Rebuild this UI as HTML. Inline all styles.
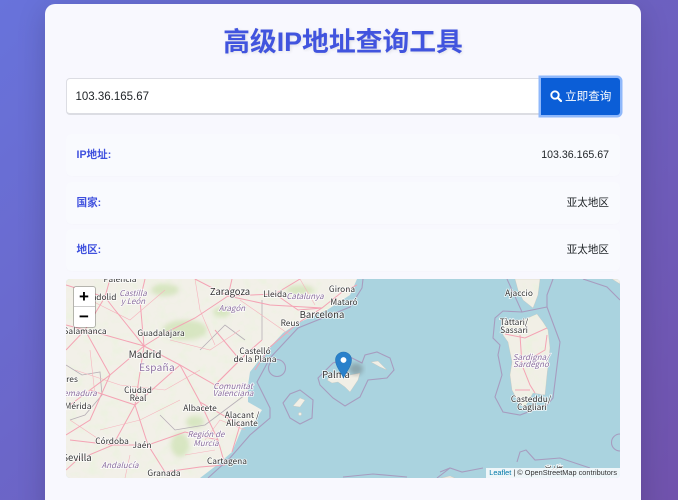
<!DOCTYPE html>
<html lang="zh">
<head>
<meta charset="utf-8">
<title>高级IP地址查询工具</title>
<style>
*{box-sizing:border-box;margin:0;padding:0}
html,body{width:678px;height:500px;overflow:hidden}
body{position:relative;background:linear-gradient(135deg,#6873db 0%,#7052ac 100%);font-family:"Liberation Sans","Noto Sans CJK SC",sans-serif}
.card{position:absolute;left:45px;top:4px;width:596px;height:520px;background:#f8f8fe;border-radius:10px;box-shadow:0 6px 28px rgba(0,0,0,.17)}
h1{position:absolute;left:45px;top:24px;width:596px;text-align:center;font:700 26.8px/36px "Liberation Sans","Noto Sans CJK SC",sans-serif;color:#4154de;text-shadow:1px 1px 3px rgba(0,0,0,.1)}
.input{position:absolute;left:66px;top:78px;width:476px;height:37px;background:#fff;border:1px solid #dcdde3;border-bottom-width:2px;border-radius:4px 0 0 4px;font-size:11.5px;line-height:36px;padding-left:8.5px;color:#212529}
.btn{position:absolute;left:541px;top:78px;width:79px;height:37px;background:#0b5ed7;border-radius:0 3px 3px 0;box-shadow:0 0 0 2.5px #8fb8fb}
.btn svg{position:absolute;left:9px;top:12px}
.btn span{position:absolute;left:24px;top:0;line-height:37px;font-size:11.6px;color:#fff;font-family:"Noto Sans CJK SC",sans-serif}
.row{position:absolute;left:66px;width:554px;height:42px;background:#f9fafe;border-radius:6px;box-shadow:0 1px 3px rgba(0,0,0,.012);font-size:10.6px;line-height:43px}
.row b{position:absolute;left:10.5px;color:#3f50de;font-weight:700;font-family:"Liberation Sans","Noto Sans CJK SC",sans-serif}
.row span{position:absolute;right:11px;color:#212529;font-family:"Liberation Sans","Noto Sans CJK SC",sans-serif}
.map{position:absolute;left:66px;top:279px;width:554px;height:199px;overflow:hidden;border-radius:4px;background:#aad3df}
.map svg{position:absolute;left:0;top:0}
.zoom{position:absolute;left:7.5px;top:8px;width:21px;height:40px;background:#fff;border-radius:2px;box-shadow:0 0 0 1px rgba(0,0,0,.25)}
.zoom div{height:20px;text-align:center;font:700 17px/20px "Liberation Sans",sans-serif;color:#000}
.zoom div:first-child{border-bottom:1px solid #ccc}
.attr{position:absolute;right:0;bottom:0;height:10.5px;padding:0 3px;background:rgba(255,255,255,.8);font:7.35px/10.5px "Liberation Sans",sans-serif;color:#333;white-space:nowrap}
.attr u{color:#0078a8;text-decoration:none}
text{font-family:"Noto Sans CJK SC","Liberation Sans",sans-serif;text-anchor:middle;paint-order:stroke;stroke:rgba(255,255,255,.85);stroke-width:1.6px;fill:#333;font-size:8.4px}
text.r{fill:#8a6d9e;font-style:italic;font-size:8px}
</style>
</head>
<body>
<div class="card"></div>
<h1>高级IP地址查询工具</h1>
<div class="input">103.36.165.67</div>
<div class="btn">
<svg width="12" height="12" viewBox="0 0 12 12"><circle cx="5" cy="5" r="3.7" fill="none" stroke="#fff" stroke-width="1.9"/><path d="M7.8 7.8L11 11" stroke="#fff" stroke-width="2.2" stroke-linecap="round"/></svg>
<span>立即查询</span></div>
<div class="row" style="top:134px"><b>IP地址:</b><span>103.36.165.67</span></div>
<div class="row" style="top:182px"><b>国家:</b><span>亚太地区</span></div>
<div class="row" style="top:229px"><b>地区:</b><span>亚太地区</span></div>
<div class="map">
<svg width="554" height="199" viewBox="66 279 554 199">
<defs>
<filter id="bl" x="-20%" y="-20%" width="140%" height="140%"><feGaussianBlur stdDeviation="2.5"/></filter>
<filter id="mot" x="0" y="0" width="100%" height="100%"><feTurbulence type="fractalNoise" baseFrequency=".09" numOctaves="3" seed="7"/><feColorMatrix values="0 0 0 0 .80  0 0 0 0 .90  0 0 0 0 .70  1.4 0 0 0 -.66"/></filter>
<clipPath id="land"><path d="M66 279H357L350 295L327 310L298 323L283 333L270 347L257 363L250 372L248 385L248 402L262 410L252 425L242 428L232 452L217 465L200 478H66Z"/></clipPath>
<clipPath id="sard"><path d="M537 314L543 322L548 330L550 348L547 375L545 395L533 393L525 407L520 405L512 390L510 375L512 362L508 342L503 335L503 320L523 320Z"/><path d="M515 279L540 279L538 295L533 308L523 300L518 290Z"/></clipPath>
</defs>
<path d="M66 279H357L350 295L327 310L298 323L283 333L270 347L257 363L250 372L248 385L248 402L262 410L252 425L242 428L232 452L217 465L200 478H66Z" fill="#f2f0e8"/>
<rect x="66" y="279" width="300" height="199" filter="url(#mot)" clip-path="url(#land)"/>
<g fill="#c6dfa8" filter="url(#bl)" opacity=".6" clip-path="url(#land)">
<ellipse cx="165" cy="290" rx="14" ry="6"/><ellipse cx="185" cy="330" rx="22" ry="10"/><ellipse cx="180" cy="445" rx="9" ry="12"/>
<ellipse cx="195" cy="422" rx="9" ry="6"/><ellipse cx="222" cy="312" rx="9" ry="5"/><ellipse cx="300" cy="290" rx="14" ry="5"/>
</g>
<g fill="#f1efe6" stroke="#c5c0b6" stroke-width=".3">
<path d="M327 380L333 375L343 373L350 375L360 373L358 380L350 392L345 387L338 382L332 383Z"/>
<path d="M371 362L378 361L387 370L380 367Z"/>
<path d="M293 406L300 398L305 400L300 407Z"/><circle cx="300" cy="414" r="1.6"/>
<path d="M537 314L543 322L548 330L550 348L547 375L545 395L533 393L525 407L520 405L512 390L510 375L512 362L508 342L503 335L503 320L523 320Z"/>
<path d="M515 279L540 279L538 295L533 308L523 300L518 290Z"/>
<path d="M612 279H620V284Z"/><path d="M441 478L450 476L455 478Z"/>
</g>
<rect x="500" y="279" width="55" height="135" filter="url(#mot)" clip-path="url(#sard)"/>
<g fill="none" stroke="#b6aeb6" stroke-width=".8">
<path d="M66 365L82 375L100 372L102 395L85 415L70 420M160 415L175 430L205 425L245 395M200 350L225 325L245 340M262 300L262 340"/>
</g>
<g fill="none" stroke="#f6b3bd" stroke-width=".6">
<path d="M90 300L130 320L165 290M75 370L120 385L165 390L200 370M100 430L140 420L180 400M170 340L210 350L240 330M240 300L290 335M185 455L215 450M70 420L100 440M195 279L200 310L215 345M90 350L95 395M245 430L220 420L205 440M300 279L315 305M130 455L125 478"/>
</g>
<g fill="none" stroke="#f4a3b4" stroke-width="1">
<path d="M66 325L105 335L144 346L165 333L195 318L228 296L270 305L322 308"/>
<path d="M144 346L180 365L215 385L248 385"/>
<path d="M180 365L200 402L240 425L232 452"/>
<path d="M144 346L135 405L113 445L77 460L66 470"/>
<path d="M144 346L110 375L70 405"/>
<path d="M144 346L115 310L105 297L66 285"/>
<path d="M144 346L140 300L145 279"/>
<path d="M200 402L218 440L225 465"/>
<path d="M135 405L148 445L165 472"/>
<path d="M113 445L148 445L185 432L218 440"/>
<path d="M165 472L200 467L225 465"/>
<path d="M322 308L298 323L270 347L255 370"/>
<path d="M275 294L298 310L322 308L342 292L357 285"/>
<path d="M228 296L232 279M228 296L195 279M228 296L275 294L300 279"/>
<path d="M90 390L135 405L180 365M70 440L113 445M240 360L215 385M110 375L90 420L66 435"/>
<path d="M110 279L105 297L85 330L66 350M85 330L110 375"/>
<path d="M215 385L245 355L262 340M215 330L240 360"/>
<path d="M505 334L525 338L547 328M520 335L522 365L530 385L535 393M515 390L530 390M547 335L545 350L528 360"/>
</g>
<g fill="none" stroke="#a79cbf" stroke-width="1.1">
<path d="M363 279L362 288L350 307L298 328L270 358L257 382L270 408L270 418L250 435L230 458L208 478"/>
<path d="M318 378L333 363L350 357L362 363L365 355L377 352L390 358L394 370L387 378L368 380L360 397L345 406L333 398L320 385Z"/>
<path d="M283 403L290 394L300 390L313 400L312 418L300 424L290 418Z"/>
<circle cx="277" cy="368" r="8.5"/>
<path d="M507 279L522 312L547 307L560 342L553 398L547 405L520 415L503 412L495 397L502 375L498 355L500 345L493 338L495 318L503 311L522 312"/>
<path d="M553 279L547 295L547 307"/>
<path d="M583 279L607 287L620 300"/>
<path d="M620 434A8 8 0 0 0 620 451"/>
<path d="M517 462L520 452L526 450L535 460L560 458L590 468"/>
<path d="M440 472L450 468L462 472L483 468"/>
<path d="M343 477L373 474L407 477M437 478L450 468"/>
</g>
<text x="230" y="295" style="font-size:9.5px">Zaragoza</text>
<text x="120" y="282">Palencia</text>
<text class="r" x="133" y="296">Castilla</text><text class="r" x="133" y="304">y León</text>
<text x="104" y="300">adolid</text>
<text class="r" x="232" y="311">Aragón</text>
<text x="85" y="334">Salamanca</text>
<text x="161" y="336">Guadalajara</text>
<text x="145" y="358" style="font-size:10px">Madrid</text>
<text class="r" x="157" y="371" style="font-size:10px;font-style:normal;letter-spacing:.3px">España</text>
<text x="255" y="354">Castelló</text><text x="255" y="362">de la Plana</text>
<text x="72" y="382">res</text>
<text class="r" x="80" y="396">emadura</text>
<text x="78" y="409">Mérida</text>
<text x="138" y="393">Ciudad</text><text x="138" y="401">Real</text>
<text class="r" x="233" y="389">Comunitat</text><text class="r" x="233" y="396">Valenciana</text>
<text x="200" y="411">Albacete</text>
<text x="242" y="418">Alacant /</text><text x="242" y="426">Alicante</text>
<text class="r" x="206" y="437">Región de</text><text class="r" x="206" y="446">Murcia</text>
<text x="112" y="444">Córdoba</text>
<text x="142" y="448">Jaén</text>
<text x="77" y="461" style="font-size:9.5px">Sevilla</text>
<text class="r" x="120" y="468">Andalucía</text>
<text x="227" y="464">Cartagena</text>
<text x="164" y="476">Granada</text>
<text x="275" y="297">Lleida</text>
<text class="r" x="305" y="299">Catalunya</text>
<text x="342" y="292">Girona</text>
<text x="344" y="305">Mataró</text>
<text x="322" y="318" style="font-size:9.5px">Barcelona</text>
<text x="290" y="326">Reus</text>
<text x="336" y="378" style="font-size:9.5px">Palma</text>
<text x="519" y="296">Ajaccio</text>
<text x="514" y="325">Tàttari/</text><text x="514" y="333">Sassari</text>
<text class="r" x="531" y="360">Sardigna/</text><text class="r" x="531" y="367">Sardegno</text>
<text x="531" y="402">Casteddu/</text><text x="532" y="410">Cagliari</text>
<text x="554" y="468" style="font-size:7px">بنزرت</text>
<ellipse cx="356" cy="369" rx="7" ry="6" fill="#555" opacity=".35" filter="url(#bl)"/>
<path d="M343.5 378C341 372 335.5 366.5 335.5 360A8 8 0 0 1 351.5 360C351.5 366.5 346 372 343.5 378Z" fill="#2a81cb" stroke="#2273b5" stroke-width=".6"/>
<circle cx="343.5" cy="360" r="2.9" fill="#fff"/>
</svg>
<div class="zoom"><div>+</div><div>−</div></div>
<div class="attr"><u>Leaflet</u> | © OpenStreetMap contributors</div>
</div>
</body>
</html>
